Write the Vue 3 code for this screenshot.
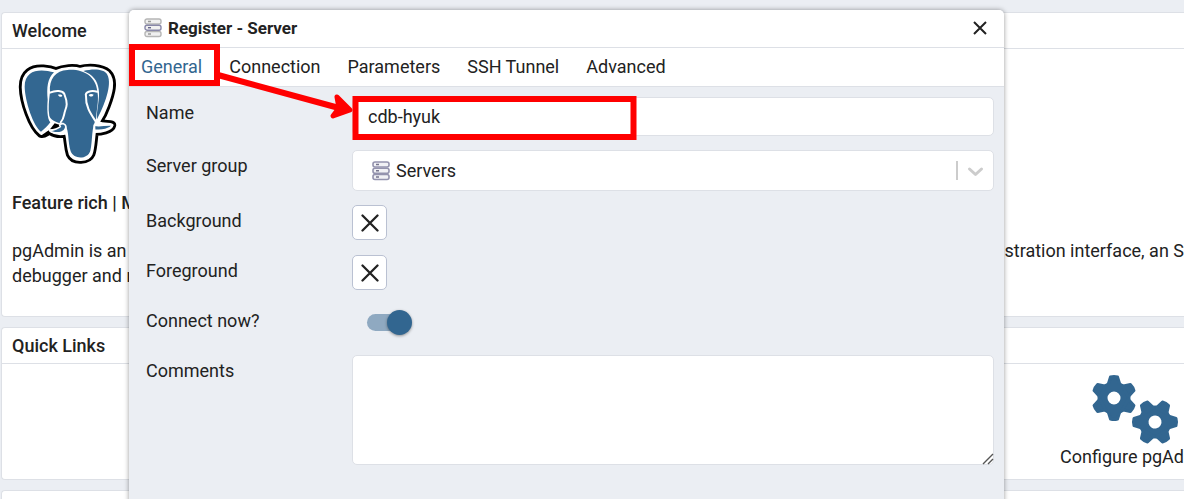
<script setup>
import { ref } from 'vue'

const tabs = ['General', 'Connection', 'Parameters', 'SSH Tunnel', 'Advanced']
const active = ref('General')
const name = ref('cdb-hyuk')
const connect = ref(true)
const comments = ref('')
const angles = [0, 60, 120, 180, 240, 300]
</script>

<template>
  <div class="page">
    <main class="dashboard">
      <section class="card welcome">
        <h2 class="card-title">Welcome</h2>
        <div class="card-body">
          <svg class="elephant" viewBox="12 15 297 306" width="99" height="102" aria-hidden="true">
            <path stroke="#000" stroke-width="29" stroke-linejoin="round" d="M82 225 C55 205 30 130 29 88 C28 45 55 32 88 34 C104 35 116 38 126 42 C150 32 180 30 198 36 C222 29 262 30 280 46 C302 68 288 110 276 142 C268 165 258 182 250 194 C268 203 284 199 292 202 C290 212 262 220 240 219 C236 250 236 270 230 287 C222 306 180 310 170 288 C162 262 164 240 158 223 C140 228 124 226 112 218 C100 212 94 228 82 225Z" />
            <path fill="#fff" stroke="#fff" stroke-width="12" stroke-linejoin="round" d="M82 225 C55 205 30 130 29 88 C28 45 55 32 88 34 C104 35 116 38 126 42 C150 32 180 30 198 36 C222 29 262 30 280 46 C302 68 288 110 276 142 C268 165 258 182 250 194 C268 203 284 199 292 202 C290 212 262 220 240 219 C236 250 236 270 230 287 C222 306 180 310 170 288 C162 262 164 240 158 223 C140 228 124 226 112 218 C116 208 108 204 82 225Z" />
            <path fill="#336791" d="M120 43 C82 32 32 32 32 86 C33 130 58 204 81 221 C91 214 102 202 109 193 C99 182 99 150 101 125 C98 88 100 62 120 43Z" />
            <path fill="#336791" d="M208 39 C238 32 270 32 280 50 C296 80 270 144 249 184 C246 163 259 120 254 94 C251 68 236 49 208 39Z" />
            <path fill="#336791" d="M108 103 C104 62 126 38 160 36 C208 32 246 55 250 101 C256 128 246 160 246 186 C232 204 236 250 229 278 C222 304 180 306 170 280 C161 250 166 222 154 200 C136 194 112 192 106 174 C102 152 105 126 108 103Z" />
            <g fill="none" stroke="#fff" stroke-width="6" stroke-linecap="round" stroke-linejoin="round">
              <path d="M108 104 C126 96 146 98 151 108 C162 136 158 146 154 156 C148 172 152 180 140 193" />
              <path d="M250 101 C230 96 212 102 216 114 C214 146 232 170 245 190" />
            </g>
            <path d="M108 214 L122 196 L146 203 L130 213Z" fill="#000" />
            <path d="M107 218 C118 216 130 213 139 206 C134 200 140 196 148 197 C162 202 154 220 142 223 C130 227 114 224 107 218Z" fill="#336791" stroke="#fff" stroke-width="5" stroke-linejoin="round" />
            <path d="M241 201 C256 207 276 198 296 201 C289 214 262 219 242 216Z" fill="#336791" stroke="#fff" stroke-width="5" stroke-linejoin="round" />
            <path d="M132 110 C138 108 144 110 145 113 C141 119 135 117 132 110Z M224 111 C228 107 234 107 239 110 C236 116 229 119 224 111Z" fill="#fff" />
          </svg>
          <h3 class="tagline">Feature rich | M</h3>
          <p class="about"><span>pgAdmin is an<br>debugger and r</span><span>stration interface, an S</span></p>
        </div>
      </section>

      <section class="card links">
        <h2 class="card-title">Quick Links</h2>
        <div class="link-row">
          <a href="#" class="quick-link">
            <svg class="gears" viewBox="0 0 87 71" width="87" height="71" aria-hidden="true">
              <g v-for="gear in ['translate(22 24)', 'translate(63 48) rotate(30)']" :key="gear" :transform="gear">
                <circle r="11.500" fill="none" stroke="#326690" stroke-width="10" />
                <path v-for="a in angles" :key="a" :transform="`rotate(${a})`" d="M-6 -13 L-3.500 -21 Q0 -22 3.500 -21 L6 -13Z" fill="#326690" stroke="#326690" stroke-width="3" stroke-linejoin="round" />
              </g>
            </svg>
            <span>Configure pgAd</span>
          </a>
        </div>
      </section>

      <section class="card"></section>
    </main>

    <div class="dialog" role="dialog" aria-labelledby="dialog-title">
      <header class="dialog-head">
        <svg viewBox="0 0 18 20" width="18" height="20" fill="#f0f0f0" stroke-width="1.4" aria-hidden="true">
          <rect x="1" y="1" width="16" height="5" rx="2" stroke="#b5b5b5" />
          <rect x="1" y="13.5" width="16" height="5" rx="2" stroke="#b5b5b5" />
          <rect x="1" y="7.2" width="16" height="5" rx="2" stroke="#8887a8" />
          <path d="M4 3.5h3M4 16h3" stroke="#999" /><path d="M4 9.7h3" stroke="#66658c" />
        </svg>
        <h1 id="dialog-title">Register - Server</h1>
        <button class="close" type="button" aria-label="Close">
          <svg viewBox="0 0 16 16" width="16" height="16"><path d="M2 2L14 14M14 2L2 14" stroke="#222" stroke-width="2" /></svg>
        </button>
      </header>

      <nav class="tabs" role="tablist">
        <button v-for="tab in tabs" :key="tab" type="button" role="tab" class="tab" :class="{ active: tab === active }" :aria-selected="tab === active" @click="active = tab">{{ tab }}</button>
      </nav>

      <form class="form" @submit.prevent>
        <label for="name">Name</label>
        <input id="name" v-model="name" class="field text" type="text">

        <label for="group">Server group</label>
        <div class="overlay-wrap">
          <select id="group" class="field"><option>Servers</option></select>
          <svg class="server-icon" viewBox="0 0 18 20" width="18" height="20" fill="#f1f1f5" stroke="#9493ae" stroke-width="1.6" aria-hidden="true">
            <rect x="1" y="1" width="16" height="5" rx="2" />
            <rect x="1" y="7.2" width="16" height="5" rx="2" />
            <rect x="1" y="13.5" width="16" height="5" rx="2" />
            <path d="M4 3.5h3M4 9.7h3M4 16h3" stroke="#77768e" />
          </svg>
          <svg class="chevron" viewBox="0 0 30 20" width="30" height="20" fill="none" stroke="#ccc" aria-hidden="true">
            <path d="M2 0V19" stroke-width="2" />
            <path d="M14.500 8L20.500 13.500L26.500 8" stroke-width="3" stroke-linecap="round" stroke-linejoin="round" />
          </svg>
        </div>

        <label for="bg">Background</label>
        <button id="bg" class="swatch" type="button" aria-label="Background"><svg viewBox="0 0 18 18" width="18" height="18"><path d="M1.500 1.500L16.500 16.500M16.500 1.500L1.500 16.500" stroke="#222" stroke-width="2.3" stroke-linecap="round" /></svg></button>

        <label for="fg">Foreground</label>
        <button id="fg" class="swatch" type="button" aria-label="Foreground"><svg viewBox="0 0 18 18" width="18" height="18"><path d="M1.500 1.500L16.500 16.500M16.500 1.500L1.500 16.500" stroke="#222" stroke-width="2.3" stroke-linecap="round" /></svg></button>

        <label for="connect">Connect now?</label>
        <div class="switch-cell"><input id="connect" v-model="connect" class="switch" type="checkbox" role="switch"></div>

        <label for="comments">Comments</label>
        <div class="overlay-wrap">
          <textarea id="comments" v-model="comments" class="field comments"></textarea>
          <svg class="grip" viewBox="0 0 12 12" width="12" height="12" fill="none" stroke="#555" stroke-width="1.4" aria-hidden="true"><path d="M1 11L11 1M6 11L11 6" /></svg>
        </div>
      </form>

      <svg class="callout" viewBox="0 0 520 140" width="520" height="140" fill="none" stroke="#f00" aria-hidden="true">
        <rect x="3" y="37" width="85" height="36" stroke-width="6" />
        <rect x="226.500" y="89" width="278" height="38" stroke-width="6" />
        <path d="M89 65L210 98" stroke-width="6" />
        <path d="M208 87L221 100L204 106L210 98Z" fill="#f00" stroke-width="5" stroke-linejoin="round" />
      </svg>
    </div>
  </div>
</template>

<style>
body { margin: 0; }
</style>

<style scoped>
* { box-sizing: border-box; }
.page {
  position: relative;
  height: 100vh;
  overflow: hidden;
  background: #ebeef3;
  color: #222;
  font: 400 18px/24px Roboto, sans-serif;
}
h1, h2, h3, p { margin: 0; }
h2, h3 { font-size: 18px; font-weight: 500; }
h1 { font-size: 17px; font-weight: 700; }
svg { display: block; flex: none; }
button, input, select, textarea { font: inherit; color: inherit; margin: 0; }
.dashboard {
  display: flex;
  flex-direction: column;
  gap: 10px;
  padding: 12px 0 0 1px;
}
.card {
  flex: none;
  min-height: 60px;
  background: #fff;
  border: 1px solid #dde0e6;
  border-right: 0;
  border-radius: 4px 0 0 4px;
}
.card-title {
  padding: 6px 10px 5px;
  border-bottom: 1px solid #dde0e6;
}
.welcome { height: 305px; }
.links { height: 153px; }
.card-body { padding: 14px 0 14px 10px; white-space: nowrap; }
.elephant { margin-left: 6px; }
.tagline { margin-top: 26px; }
.about {
  display: flex;
  justify-content: space-between;
  margin-top: 23px;
  line-height: 25px;
}
.link-row {
  display: flex;
  justify-content: flex-end;
  padding-top: 10px;
}
.quick-link {
  color: inherit;
  text-decoration: none;
  white-space: nowrap;
}
.gears { margin-left: 32px; }
.dialog {
  position: absolute;
  top: 10px;
  right: 180px;
  bottom: -20px;
  left: 129px;
  background: #ebeef3;
  border-radius: 5px;
  box-shadow: 0 0 5px rgba(0, 0, 0, .4);
}
.dialog-head {
  display: flex;
  align-items: center;
  gap: 6px;
  height: 38px;
  padding: 0 16px 2px 15px;
  background: #fff;
  border-bottom: 1px solid #dde0e6;
  border-radius: 5px 5px 0 0;
}
.close {
  display: flex;
  margin-left: auto;
  padding: 0;
  border: 0;
  background: none;
}
.tabs {
  display: flex;
  gap: 3px;
  height: 39px;
  background: #fff;
  border-bottom: 1px solid #dde0e6;
}
.tab {
  padding: 0 12px;
  border: 0;
  background: none;
}
.tab.active { color: #326690; }
.form {
  display: grid;
  grid-template-columns: 206px 1fr;
  row-gap: 14px;
  padding: 10px 10px 0 17px;
}
label { padding-top: 4px; height: 36px; }
.field {
  width: 100%;
  background: #fff;
  border: 1px solid #dde0e6;
  border-radius: 5px;
  outline: 0;
}
.text { height: 39px; padding: 0 15px; }
.overlay-wrap {
  display: grid;
  align-items: center;
}
.overlay-wrap > * { grid-area: 1 / 1; }
.overlay-wrap select {
  height: 41px;
  padding: 0 43px;
  appearance: none;
}
.server-icon { margin-left: 20px; pointer-events: none; }
.chevron { justify-self: end; margin-right: 9px; pointer-events: none; }
.swatch {
  display: grid;
  place-items: center;
  width: 35px;
  height: 35px;
  padding: 0;
  background: #fff;
  border: 1px solid #bac1d2;
  border-radius: 5px;
}
.switch-cell { padding: 5px 15px; height: 36px; }
.switch {
  display: flex;
  align-items: center;
  width: 45px;
  height: 25px;
  appearance: none;
}
.switch::before {
  content: "";
  flex: 1;
  height: 17px;
  margin-right: -13px;
  border-radius: 9px;
  background: #8fa9c1;
}
.switch::after {
  content: "";
  position: relative;
  width: 25px;
  height: 25px;
  border-radius: 50%;
  background: #326690;
  box-shadow: 0 1px 3px rgba(0, 0, 0, .4);
}
.comments { height: 110px; padding: 8px 15px; resize: none; }
.grip { place-self: end; pointer-events: none; }
.callout {
  position: absolute;
  top: 0;
  left: 0;
  pointer-events: none;
}
</style>
